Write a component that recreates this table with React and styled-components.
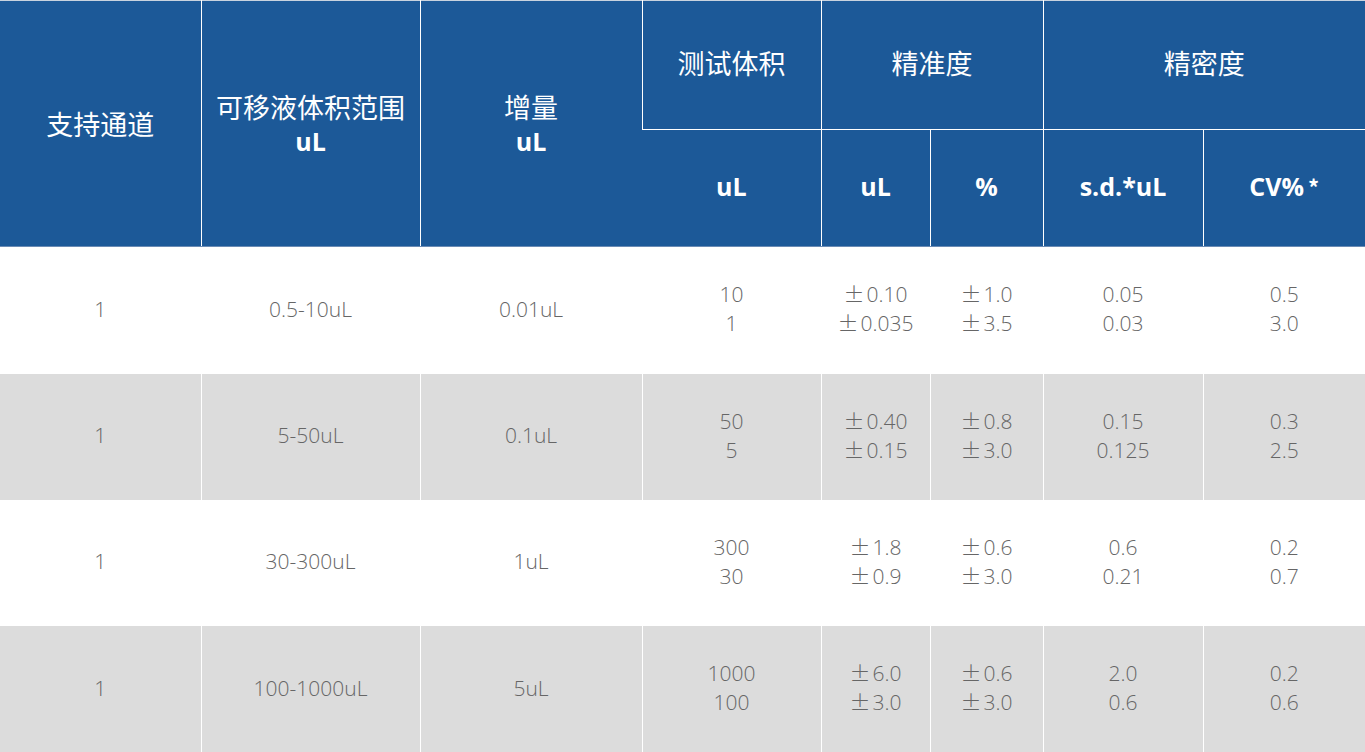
import React from 'react';
import styled, { createGlobalStyle } from 'styled-components';

const GlobalStyle = createGlobalStyle`
  html, body {
    margin: 0;
    padding: 0;
    background: #fff;
  }
  body {
    font-family: 'Open Sans', 'Noto Sans CJK SC', sans-serif;
  }
`;

// tabela principal
const Table = styled.table`
  width: 1365px;
  table-layout: fixed;
  border-collapse: collapse;
  border-top: 1px solid #c9d3df;
`;

const HeadCell = styled.th`
  background: #1c5998;
  color: #fff;
  font-family: 'Noto Sans CJK SC', 'Open Sans', sans-serif;
  font-size: 27px;
  font-weight: 400;
  line-height: 34px;
  text-align: center;
  vertical-align: middle;
  border-left: 1px solid #fff;
  border-bottom: 1px solid ${(p) => (p.$last ? '#6a8bb4' : '#fff')};
  height: ${(p) => p.$h}px;
  padding: 0 0 ${(p) => p.$pb || 0}px;
  box-sizing: border-box;
  &:first-child {
    border-left: none;
  }
`;

const Unit = styled.span`
  display: block;
  font-family: 'Open Sans', sans-serif;
  font-weight: 700;
  font-size: 25px;
`;

const Star = styled.span`
  font-family: 'Noto Sans CJK SC', sans-serif;
  font-size: 22px;
  margin-left: 4px;
`;

const Row = styled.tr`
  background: ${(p) => (p.$grey ? '#dcdcdc' : '#fff')};
`;

const Cell = styled.td`
  color: #666;
  font-family: 'Open Sans', sans-serif;
  font-weight: 300;
  font-size: 21px;
  line-height: 29px;
  text-align: center;
  vertical-align: middle;
  border-left: 1px solid #fff;
  height: ${(p) => p.$h}px;
  padding: 0 0 2px;
  box-sizing: border-box;
  &:first-child {
    border-left: none;
  }
`;

const Pm = styled.span`
  font-family: 'Noto Sans CJK SC', sans-serif;
  font-weight: 300;
  line-height: 0;
  margin-right: 2px;
`;

const widths = [201, 219, 222, 179, 109, 113, 160, 162];

const rows = [
  { range: '0.5-10uL', inc: '0.01uL', vol: ['10', '1'], accUl: ['0.10', '0.035'], accPct: ['1.0', '3.5'], sd: ['0.05', '0.03'], cv: ['0.5', '3.0'], h: 127 },
  { range: '5-50uL', inc: '0.1uL', vol: ['50', '5'], accUl: ['0.40', '0.15'], accPct: ['0.8', '3.0'], sd: ['0.15', '0.125'], cv: ['0.3', '2.5'], h: 126 },
  { range: '30-300uL', inc: '1uL', vol: ['300', '30'], accUl: ['1.8', '0.9'], accPct: ['0.6', '3.0'], sd: ['0.6', '0.21'], cv: ['0.2', '0.7'], h: 126 },
  { range: '100-1000uL', inc: '5uL', vol: ['1000', '100'], accUl: ['6.0', '3.0'], accPct: ['0.6', '3.0'], sd: ['2.0', '0.6'], cv: ['0.2', '0.6'], h: 127 },
];

const Lines = ({ items, pm }) => (
  <>
    {pm && <Pm>±</Pm>}
    {items[0]}
    <br />
    {pm && <Pm>±</Pm>}
    {items[1]}
  </>
);

const App = () => {
  return (
    <>
      <GlobalStyle />
      <Table>
        <colgroup>
          {widths.map((w, i) => (
            <col key={i} style={{ width: w }} />
          ))}
        </colgroup>
        <thead>
          <tr>
            <HeadCell rowSpan={2} $h={129} $last>支持通道</HeadCell>
            <HeadCell rowSpan={2} $last>
              可移液体积范围
              <Unit>uL</Unit>
            </HeadCell>
            <HeadCell rowSpan={2} $last>
              增量
              <Unit>uL</Unit>
            </HeadCell>
            <HeadCell $h={129} $pb={4}>测试体积</HeadCell>
            <HeadCell colSpan={2} $pb={4}>精准度</HeadCell>
            <HeadCell colSpan={2} $pb={4}>精密度</HeadCell>
          </tr>
          <tr>
            <HeadCell $h={117} $pb={4} $last><Unit>uL</Unit></HeadCell>
            <HeadCell $pb={4} $last><Unit>uL</Unit></HeadCell>
            <HeadCell $pb={4} $last><Unit>%</Unit></HeadCell>
            <HeadCell $pb={4} $last><Unit>s.d.*uL</Unit></HeadCell>
            <HeadCell $pb={4} $last><Unit>CV%<Star>*</Star></Unit></HeadCell>
          </tr>
        </thead>
        <tbody>
          {rows.map((r, i) => (
            <Row key={i} $grey={i % 2 === 1}>
              <Cell $h={r.h}>1</Cell>
              <Cell>{r.range}</Cell>
              <Cell>{r.inc}</Cell>
              <Cell><Lines items={r.vol} /></Cell>
              <Cell><Lines items={r.accUl} pm /></Cell>
              <Cell><Lines items={r.accPct} pm /></Cell>
              <Cell><Lines items={r.sd} /></Cell>
              <Cell><Lines items={r.cv} /></Cell>
            </Row>
          ))}
        </tbody>
      </Table>
    </>
  );
};

export default App;
